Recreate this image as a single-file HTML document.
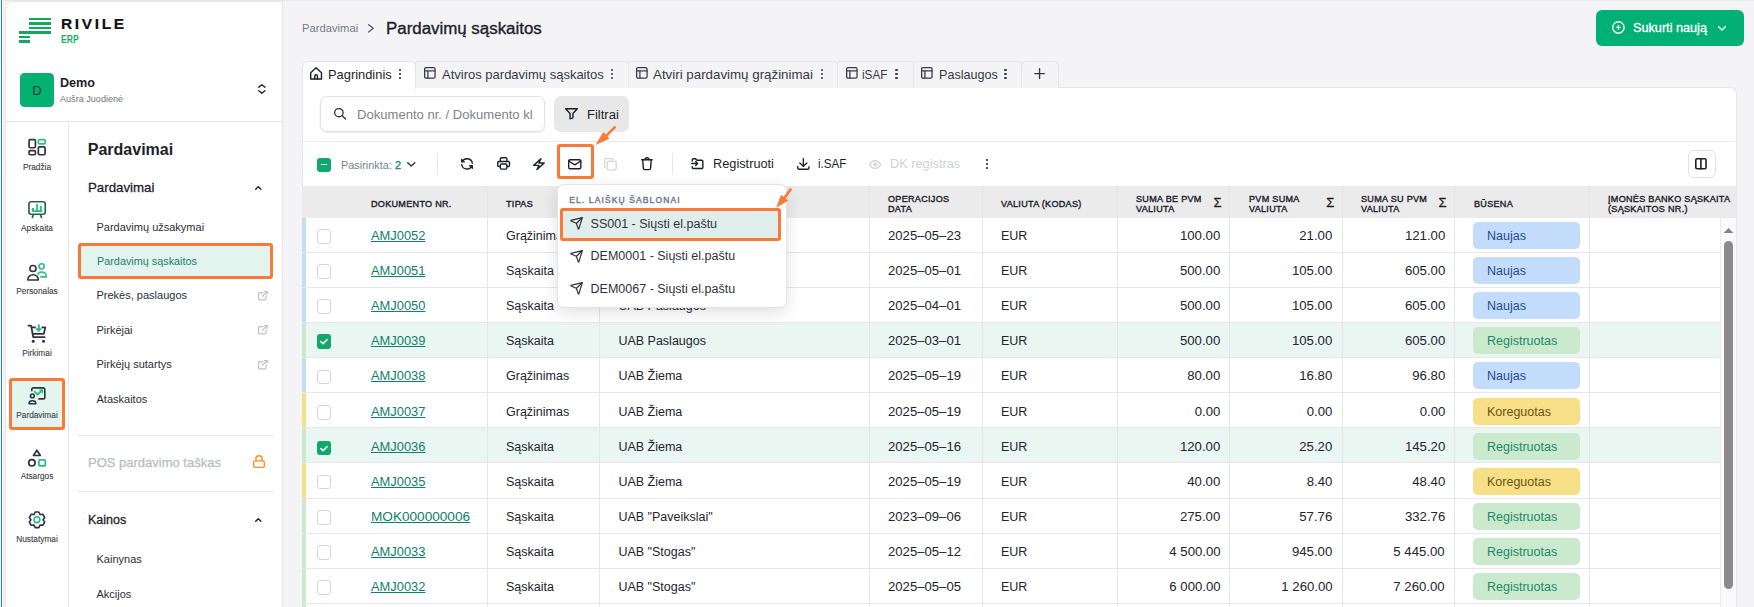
<!DOCTYPE html><html><head><meta charset="utf-8"><style>
html,body{margin:0;padding:0;} body{width:1754px;height:607px;overflow:hidden;position:relative;background:#f4f4f6;font-family:"Liberation Sans", sans-serif;} div,svg{box-sizing:border-box;} svg.i *{vector-effect:non-scaling-stroke;}
</style></head><body>
<div style="position:absolute;left:0px;top:0px;width:1754px;height:1px;background:#e9e9eb"></div>
<div style="position:absolute;left:0px;top:0px;width:1px;height:607px;background:#ffffff"></div>
<div style="position:absolute;left:1px;top:0px;width:1px;height:607px;background:#2584de"></div>
<div style="position:absolute;left:2px;top:0px;width:1px;height:607px;background:#fbfbf7"></div>
<div style="position:absolute;left:5px;top:1px;width:278px;height:606px;background:#fff;border:1px solid #e6e6e8;border-bottom:none;border-radius:7px 0 0 0;"></div>
<div style="position:absolute;left:29.2px;top:18.1px;width:21.7px;height:2.3px;background:#12a95f"></div>
<div style="position:absolute;left:29.2px;top:22.4px;width:21.7px;height:2.3px;background:#12a95f"></div>
<div style="position:absolute;left:29.2px;top:27px;width:21.7px;height:2.3px;background:#12a95f"></div>
<div style="position:absolute;left:18.9px;top:31.3px;width:32px;height:2.3px;background:#12a95f"></div>
<div style="position:absolute;left:18.9px;top:35.9px;width:11px;height:2.3px;background:#12a95f"></div>
<div style="position:absolute;left:18.9px;top:40.3px;width:11px;height:2.3px;background:#12a95f"></div>
<div style='position:absolute;left:61.00px;top:15.78px;font-size:15.5px;line-height:15.5px;font-weight:700;color:#111;white-space:nowrap;letter-spacing:2.64px;-webkit-text-stroke:0.2px #111;'>RIVILE</div>
<div style='position:absolute;left:61.00px;top:34.63px;font-size:10px;line-height:10px;font-weight:700;color:#1aae66;white-space:nowrap;transform:scaleX(0.855);transform-origin:left center;'>ERP</div>
<div style="position:absolute;left:20px;top:73px;width:34px;height:34px;background:#03b273;border-radius:4.5px;"></div>
<div style='position:absolute;left:32.30px;top:84.40px;font-size:13px;line-height:13px;font-weight:400;color:#0b3d2a;white-space:nowrap;'>D</div>
<div style='position:absolute;left:60.00px;top:76.40px;font-size:13px;line-height:13px;font-weight:700;color:#1d1f2b;white-space:nowrap;transform:scaleX(0.97);transform-origin:left center;'>Demo</div>
<div style='position:absolute;left:60.00px;top:94.78px;font-size:9px;line-height:9px;font-weight:400;color:#6f7380;white-space:nowrap;transform:scaleX(1.01);transform-origin:left center;'>Aušra Juodienė</div>
<svg class="i" style="position:absolute;left:258.00px;top:84.00px;overflow:visible;" width="7.70" height="9.90"><g transform="translate(-5.450 -2.250) scale(0.7750 0.6000)" fill="none" stroke="#2a2d38" stroke-width="1.5" stroke-linecap="round" stroke-linejoin="round"><path d="M8 9l4 -4l4 4"/><path d="M16 15l-4 4l-4 -4"/></g></svg>
<div style="position:absolute;left:6px;top:121px;width:276px;height:1px;background:#e6e6e8"></div>
<div style="position:absolute;left:68px;top:122px;width:1px;height:485px;background:#e6e6e8"></div>
<div style="position:absolute;left:9px;top:378px;width:56px;height:52px;background:#e4f5ef;border:3px solid #f97a38;border-radius:3px;"></div>
<svg style="position:absolute;left:24px;top:130px;overflow:visible" width="26" height="26" viewBox="0 0 26 26" fill="none" stroke-width="1.7" stroke-linecap="round" stroke-linejoin="round"><rect x="5.05" y="9.65" width="6.4" height="8.1" rx="1.2" stroke="#2f3340"/><rect x="5.05" y="20.55" width="6.4" height="4.2" rx="1.2" stroke="#2f3340"/><rect x="14.35" y="9.65" width="6.7" height="4.3" rx="1.2" stroke="#2bbd7e"/><rect x="14.35" y="16.85" width="6.7" height="7.9" rx="1.2" stroke="#2f3340"/></svg>
<div style="position:absolute;left:-3px;width:80px;text-align:center;top:162.87px;font-size:8.3px;line-height:8.3px;color:#3a3d48;white-space:nowrap;-webkit-text-stroke:0.1px #3a3d48">Pradžia</div>
<svg style="position:absolute;left:24px;top:196px;overflow:visible" width="26" height="26" viewBox="0 0 26 26" fill="none" stroke-width="1.7" stroke-linecap="round" stroke-linejoin="round"><rect x="4.95" y="5.75" width="16.3" height="12.5" rx="2.2" stroke="#2f5f55"/><path d="M9.2 19.1L8.4 21.4M16.6 19.1L17.5 21.4" stroke="#2f5f55"/><path d="M7.8 15.9V12H10V14.2H12.1V7.8H13.9V14.2H15.8V10.1H17.8V14L18.5 15.9Z" fill="#2bbd7e" stroke="none"/></svg>
<div style="position:absolute;left:-3px;width:80px;text-align:center;top:224.37px;font-size:8.3px;line-height:8.3px;color:#3a3d48;white-space:nowrap;-webkit-text-stroke:0.1px #3a3d48">Apskaita</div>
<svg style="position:absolute;left:24px;top:258px;overflow:visible" width="26" height="26" viewBox="0 0 26 26" fill="none" stroke-width="1.7" stroke-linecap="round" stroke-linejoin="round"><circle cx="9" cy="10.5" r="3.05" stroke="#2f3340" stroke-width="1.6"/><path d="M3.9 22V21.6A5.2 4.8 0 0 1 14.3 21.6V22Z" stroke="#2f3340" stroke-width="1.6"/><circle cx="17.6" cy="8.35" r="2.6" stroke="#2bbd7e" stroke-width="1.6"/><path d="M13.8 16.0A4.6 4.3 0 0 1 22.2 18.7V18.9H16.8" stroke="#2bbd7e" stroke-width="1.6"/></svg>
<div style="position:absolute;left:-3px;width:80px;text-align:center;top:287.37px;font-size:8.3px;line-height:8.3px;color:#3a3d48;white-space:nowrap;-webkit-text-stroke:0.1px #3a3d48">Personalas</div>
<svg style="position:absolute;left:24px;top:320px;overflow:visible" width="26" height="26" viewBox="0 0 26 26" fill="none" stroke-width="1.7" stroke-linecap="round" stroke-linejoin="round"><path d="M4.4 5.6H7.1L9.2 17.2H20.5" stroke="#2f3340" stroke-width="1.8"/><path d="M7.9 7.4H11M18.3 7.4H21.3L19.8 13.9H9.3" stroke="#2f3340" stroke-width="1.8"/><circle cx="9.2" cy="21.2" r="1.5" fill="#2f3340" stroke="none"/><circle cx="19.5" cy="21.2" r="1.5" fill="#2f3340" stroke="none"/><path d="M14.8 5.3V9.5" stroke="#2bbd7e" stroke-width="1.9"/><path d="M12.1 8.7H17.5L14.8 11.7Z" fill="#2bbd7e" stroke="#2bbd7e" stroke-width="0.8"/></svg>
<div style="position:absolute;left:-3px;width:80px;text-align:center;top:349.37px;font-size:8.3px;line-height:8.3px;color:#3a3d48;white-space:nowrap;-webkit-text-stroke:0.1px #3a3d48">Pirkimai</div>
<svg style="position:absolute;left:24px;top:382px;overflow:visible" width="26" height="26" viewBox="0 0 26 26" fill="none" stroke-width="1.7" stroke-linecap="round" stroke-linejoin="round"><path d="M7.8 8.8V7.6A1.7 1.7 0 0 1 9.5 5.9H19.1A1.7 1.7 0 0 1 20.8 7.6V15.2A1.7 1.7 0 0 1 19.1 16.9H14.9" stroke="#2f3340" stroke-width="1.6"/><circle cx="8.35" cy="13.9" r="1.85" stroke="#2f3340" stroke-width="1.6"/><path d="M5.1 21.8V21.3A3.35 2.6 0 0 1 11.8 21.3V21.8Z" stroke="#2f3340" stroke-width="1.6"/><path d="M10.6 9.7L13.5 12.6L17.4 8.9" stroke="#2bbd7e" stroke-width="1.8"/><path d="M15.8 7.9L18.9 7.6L18.5 10.8Z" fill="#2bbd7e" stroke="#2bbd7e" stroke-width="0.8"/></svg>
<div style="position:absolute;left:-3px;width:80px;text-align:center;top:411.37px;font-size:8.3px;line-height:8.3px;color:#3a3d48;white-space:nowrap;-webkit-text-stroke:0.1px #3a3d48">Pardavimai</div>
<svg style="position:absolute;left:24px;top:444px;overflow:visible" width="26" height="26" viewBox="0 0 26 26" fill="none" stroke-width="1.7" stroke-linecap="round" stroke-linejoin="round"><path d="M12.85 6.2L16.3 11.5H9.5Z" stroke="#2f3340" stroke-width="1.7"/><circle cx="7.9" cy="18.8" r="3.2" stroke="#2f3340" stroke-width="1.7"/><rect x="14.9" y="15.8" width="6.4" height="6.1" rx="0.8" stroke="#2bbd7e" stroke-width="1.7"/></svg>
<div style="position:absolute;left:-3px;width:80px;text-align:center;top:472.37px;font-size:8.3px;line-height:8.3px;color:#3a3d48;white-space:nowrap;-webkit-text-stroke:0.1px #3a3d48">Atsargos</div>
<svg style="position:absolute;left:24px;top:506px;overflow:visible" width="26" height="26" viewBox="0 0 26 26" fill="none" stroke-width="1.7" stroke-linecap="round" stroke-linejoin="round"><path d="M11.20 6.01 L14.80 6.01 L16.05 8.52 L18.85 8.34 L20.65 11.46 L19.10 13.80 L20.65 16.14 L18.85 19.26 L16.05 19.08 L14.80 21.59 L11.20 21.59 L9.95 19.08 L7.15 19.26 L5.35 16.14 L6.90 13.80 L5.35 11.46 L7.15 8.34 L9.95 8.52Z" stroke="#2f3340" stroke-width="1.6"/><circle cx="12.9" cy="13.7" r="2.9" stroke="#2bbd7e" stroke-width="1.6"/></svg>
<div style="position:absolute;left:-3px;width:80px;text-align:center;top:534.87px;font-size:8.3px;line-height:8.3px;color:#3a3d48;white-space:nowrap;-webkit-text-stroke:0.1px #3a3d48">Nustatymai</div>
<div style='position:absolute;left:87.80px;top:142.16px;font-size:16px;line-height:16px;font-weight:700;color:#1d1f2b;white-space:nowrap;'>Pardavimai</div>
<div style='position:absolute;left:87.80px;top:180.80px;font-size:13px;line-height:13px;font-weight:400;color:#1d1f2b;white-space:nowrap;-webkit-text-stroke:0.3px #1d1f2b;transform:scaleX(1.02);transform-origin:left center;'>Pardavimai</div>
<svg class="i" style="position:absolute;left:254.90px;top:185.90px;overflow:visible;" width="6.60" height="3.90"><g transform="translate(-1.900 -3.050) scale(0.4333 0.4167)" fill="none" stroke="#1d1f2b" stroke-width="1.4" stroke-linecap="round" stroke-linejoin="round"><path d="M6 15l6 -6l6 6"/></g></svg>
<div style="position:absolute;left:78px;top:243px;width:195px;height:35.6px;background:#e3f4ee;border:3px solid #f97a38;border-radius:3px;"></div>
<div style='position:absolute;left:96.50px;top:222.39px;font-size:11px;line-height:11px;font-weight:400;color:#2b2e3a;white-space:nowrap;'>Pardavimų užsakymai</div>
<div style='position:absolute;left:96.50px;top:255.89px;font-size:11px;line-height:11px;font-weight:400;color:#17806a;white-space:nowrap;transform:scaleX(0.985);transform-origin:left center;'>Pardavimų sąskaitos</div>
<div style='position:absolute;left:96.50px;top:290.29px;font-size:11px;line-height:11px;font-weight:400;color:#2b2e3a;white-space:nowrap;'>Prekės, paslaugos</div>
<div style='position:absolute;left:96.50px;top:325.49px;font-size:11px;line-height:11px;font-weight:400;color:#2b2e3a;white-space:nowrap;'>Pirkėjai</div>
<div style='position:absolute;left:96.50px;top:358.99px;font-size:11px;line-height:11px;font-weight:400;color:#2b2e3a;white-space:nowrap;'>Pirkėjų sutartys</div>
<div style='position:absolute;left:96.50px;top:393.59px;font-size:11px;line-height:11px;font-weight:400;color:#2b2e3a;white-space:nowrap;'>Ataskaitos</div>
<svg class="i" style="position:absolute;left:258.10px;top:290.80px;overflow:visible;" width="9.80" height="9.50"><g transform="translate(-1.550 -1.475) scale(0.5375 0.5188)" fill="none" stroke="#bfc1c6" stroke-width="1.2" stroke-linecap="round" stroke-linejoin="round"><path d="M12 6h-6a2 2 0 0 0 -2 2v10a2 2 0 0 0 2 2h10a2 2 0 0 0 2 -2v-6"/><path d="M11 13l9 -9"/><path d="M15 4h5v5"/></g></svg>
<svg class="i" style="position:absolute;left:258.10px;top:325.20px;overflow:visible;" width="9.80" height="9.50"><g transform="translate(-1.550 -1.475) scale(0.5375 0.5188)" fill="none" stroke="#bfc1c6" stroke-width="1.2" stroke-linecap="round" stroke-linejoin="round"><path d="M12 6h-6a2 2 0 0 0 -2 2v10a2 2 0 0 0 2 2h10a2 2 0 0 0 2 -2v-6"/><path d="M11 13l9 -9"/><path d="M15 4h5v5"/></g></svg>
<svg class="i" style="position:absolute;left:258.10px;top:359.50px;overflow:visible;" width="9.80" height="9.50"><g transform="translate(-1.550 -1.475) scale(0.5375 0.5188)" fill="none" stroke="#bfc1c6" stroke-width="1.2" stroke-linecap="round" stroke-linejoin="round"><path d="M12 6h-6a2 2 0 0 0 -2 2v10a2 2 0 0 0 2 2h10a2 2 0 0 0 2 -2v-6"/><path d="M11 13l9 -9"/><path d="M15 4h5v5"/></g></svg>
<div style="position:absolute;left:78px;top:435px;width:195px;height:1px;background:#e6e6e8"></div>
<div style='position:absolute;left:88.00px;top:455.70px;font-size:13px;line-height:13px;font-weight:400;color:#b9bcc3;white-space:nowrap;-webkit-text-stroke:0.25px #b9bcc3;'>POS pardavimo taškas</div>
<svg class="i" style="position:absolute;left:253.00px;top:455.20px;overflow:visible;" width="12.00" height="13.10"><g transform="translate(-3.086 -1.250) scale(0.7571 0.6500)" fill="none" stroke="#ff8c1a" stroke-width="1.4" stroke-linecap="round" stroke-linejoin="round"><path d="M5 13a2 2 0 0 1 2 -2h10a2 2 0 0 1 2 2v6a2 2 0 0 1 -2 2h-10a2 2 0 0 1 -2 -2v-6z"/><path d="M8 11v-4a4 4 0 1 1 8 0v4"/></g></svg>
<div style="position:absolute;left:78px;top:491px;width:195px;height:1px;background:#e6e6e8"></div>
<div style='position:absolute;left:88.00px;top:513.62px;font-size:12.5px;line-height:12.5px;font-weight:400;color:#1d1f2b;white-space:nowrap;-webkit-text-stroke:0.3px #1d1f2b;'>Kainos</div>
<svg class="i" style="position:absolute;left:254.90px;top:517.90px;overflow:visible;" width="6.60" height="3.90"><g transform="translate(-1.900 -3.050) scale(0.4333 0.4167)" fill="none" stroke="#1d1f2b" stroke-width="1.4" stroke-linecap="round" stroke-linejoin="round"><path d="M6 15l6 -6l6 6"/></g></svg>
<div style='position:absolute;left:96.50px;top:554.49px;font-size:11px;line-height:11px;font-weight:400;color:#2b2e3a;white-space:nowrap;'>Kainynas</div>
<div style='position:absolute;left:96.50px;top:589.09px;font-size:11px;line-height:11px;font-weight:400;color:#2b2e3a;white-space:nowrap;'>Akcijos</div>
<div style="position:absolute;left:282px;top:1px;width:1px;height:606px;background:#e6e6e8"></div>
<div style='position:absolute;left:301.70px;top:23.29px;font-size:11px;line-height:11px;font-weight:400;color:#767884;white-space:nowrap;transform:scaleX(1.02);transform-origin:left center;'>Pardavimai</div>
<svg class="i" style="position:absolute;left:368.40px;top:24.40px;overflow:visible;" width="5.90" height="8.60"><g transform="translate(-6.250 -3.000) scale(0.7667 0.6083)" fill="none" stroke="#555866" stroke-width="1.3" stroke-linecap="round" stroke-linejoin="round"><path d="M9 6l6 6l-6 6"/></g></svg>
<div style='position:absolute;left:385.70px;top:20.86px;font-size:16px;line-height:16px;font-weight:400;color:#1d1f2b;white-space:nowrap;-webkit-text-stroke:0.35px #1d1f2b;transform:scaleX(1.055);transform-origin:left center;'>Pardavimų sąskaitos</div>
<div style="position:absolute;left:1596px;top:10px;width:148px;height:36px;background:#00b074;border-radius:6px;"></div>
<svg class="i" style="position:absolute;left:1611.50px;top:21.20px;overflow:visible;" width="12.80" height="12.80"><g transform="translate(-1.200 -1.200) scale(0.6333 0.6333)" fill="none" stroke="#fff" stroke-width="1.4" stroke-linecap="round" stroke-linejoin="round"><path d="M3 12a9 9 0 1 0 18 0a9 9 0 0 0 -18 0"/><path d="M9 12h6"/><path d="M12 9v6"/></g></svg>
<div style='position:absolute;left:1633.00px;top:20.90px;font-size:13px;line-height:13px;font-weight:400;color:#fff;white-space:nowrap;-webkit-text-stroke:0.3px #fff;transform:scaleX(0.975);transform-origin:left center;'>Sukurti naują</div>
<svg class="i" style="position:absolute;left:1718.00px;top:25.50px;overflow:visible;" width="8.00" height="4.70"><g transform="translate(-2.600 -4.250) scale(0.5500 0.5500)" fill="none" stroke="#fff" stroke-width="1.4" stroke-linecap="round" stroke-linejoin="round"><path d="M6 9l6 6l6 -6"/></g></svg>
<div style="position:absolute;left:302px;top:87px;width:1435px;height:520px;background:#fff;border:1px solid #e6e6e8;border-bottom:none;border-radius:0 7px 0 0;"></div>
<div style="position:absolute;left:415px;top:61px;width:213.5px;height:27px;background:#f4f4f6;border:1px solid #e6e6e8;border-bottom:none;border-radius:4px 4px 0 0;"></div>
<svg class="i" style="position:absolute;left:424.20px;top:67.20px;overflow:visible;" width="11.70" height="11.80"><g transform="translate(-1.950 -1.975) scale(0.6500 0.6562)" fill="none" stroke="#3a3d48" stroke-width="1.3" stroke-linecap="round" stroke-linejoin="round"><path d="M4 6a2 2 0 0 1 2 -2h12a2 2 0 0 1 2 2v12a2 2 0 0 1 -2 2h-12a2 2 0 0 1 -2 -2z"/><path d="M4 9h16"/><path d="M9 9v11"/></g></svg>
<div style='position:absolute;left:442.00px;top:67.90px;font-size:13px;line-height:13px;font-weight:400;color:#363945;white-space:nowrap;'>Atviros pardavimų sąskaitos</div>
<div style="position:absolute;left:610.55px;top:69.20px;width:2.3px;height:2.3px;border-radius:50%;background:#363945"></div>
<div style="position:absolute;left:610.55px;top:72.95px;width:2.3px;height:2.3px;border-radius:50%;background:#363945"></div>
<div style="position:absolute;left:610.55px;top:76.70px;width:2.3px;height:2.3px;border-radius:50%;background:#363945"></div>
<div style="position:absolute;left:627.5px;top:61px;width:210.5px;height:27px;background:#f4f4f6;border:1px solid #e6e6e8;border-bottom:none;border-radius:4px 4px 0 0;"></div>
<svg class="i" style="position:absolute;left:636.00px;top:67.20px;overflow:visible;" width="11.70" height="11.80"><g transform="translate(-1.950 -1.975) scale(0.6500 0.6562)" fill="none" stroke="#3a3d48" stroke-width="1.3" stroke-linecap="round" stroke-linejoin="round"><path d="M4 6a2 2 0 0 1 2 -2h12a2 2 0 0 1 2 2v12a2 2 0 0 1 -2 2h-12a2 2 0 0 1 -2 -2z"/><path d="M4 9h16"/><path d="M9 9v11"/></g></svg>
<div style='position:absolute;left:652.80px;top:67.90px;font-size:13px;line-height:13px;font-weight:400;color:#363945;white-space:nowrap;transform:scaleX(1.025);transform-origin:left center;'>Atviri pardavimų grąžinimai</div>
<div style="position:absolute;left:820.85px;top:69.20px;width:2.3px;height:2.3px;border-radius:50%;background:#363945"></div>
<div style="position:absolute;left:820.85px;top:72.95px;width:2.3px;height:2.3px;border-radius:50%;background:#363945"></div>
<div style="position:absolute;left:820.85px;top:76.70px;width:2.3px;height:2.3px;border-radius:50%;background:#363945"></div>
<div style="position:absolute;left:837px;top:61px;width:76.5px;height:27px;background:#f4f4f6;border:1px solid #e6e6e8;border-bottom:none;border-radius:4px 4px 0 0;"></div>
<svg class="i" style="position:absolute;left:845.80px;top:67.20px;overflow:visible;" width="11.70" height="11.80"><g transform="translate(-1.950 -1.975) scale(0.6500 0.6562)" fill="none" stroke="#3a3d48" stroke-width="1.3" stroke-linecap="round" stroke-linejoin="round"><path d="M4 6a2 2 0 0 1 2 -2h12a2 2 0 0 1 2 2v12a2 2 0 0 1 -2 2h-12a2 2 0 0 1 -2 -2z"/><path d="M4 9h16"/><path d="M9 9v11"/></g></svg>
<div style='position:absolute;left:862.40px;top:67.90px;font-size:13px;line-height:13px;font-weight:400;color:#363945;white-space:nowrap;transform:scaleX(0.9);transform-origin:left center;'>iSAF</div>
<div style="position:absolute;left:895.45px;top:69.20px;width:2.3px;height:2.3px;border-radius:50%;background:#363945"></div>
<div style="position:absolute;left:895.45px;top:72.95px;width:2.3px;height:2.3px;border-radius:50%;background:#363945"></div>
<div style="position:absolute;left:895.45px;top:76.70px;width:2.3px;height:2.3px;border-radius:50%;background:#363945"></div>
<div style="position:absolute;left:912.5px;top:61px;width:109.5px;height:27px;background:#f4f4f6;border:1px solid #e6e6e8;border-bottom:none;border-radius:4px 4px 0 0;"></div>
<svg class="i" style="position:absolute;left:921.40px;top:67.20px;overflow:visible;" width="11.70" height="11.80"><g transform="translate(-1.950 -1.975) scale(0.6500 0.6562)" fill="none" stroke="#3a3d48" stroke-width="1.3" stroke-linecap="round" stroke-linejoin="round"><path d="M4 6a2 2 0 0 1 2 -2h12a2 2 0 0 1 2 2v12a2 2 0 0 1 -2 2h-12a2 2 0 0 1 -2 -2z"/><path d="M4 9h16"/><path d="M9 9v11"/></g></svg>
<div style='position:absolute;left:938.60px;top:67.90px;font-size:13px;line-height:13px;font-weight:400;color:#363945;white-space:nowrap;transform:scaleX(0.97);transform-origin:left center;'>Paslaugos</div>
<div style="position:absolute;left:1004.45px;top:69.20px;width:2.3px;height:2.3px;border-radius:50%;background:#363945"></div>
<div style="position:absolute;left:1004.45px;top:72.95px;width:2.3px;height:2.3px;border-radius:50%;background:#363945"></div>
<div style="position:absolute;left:1004.45px;top:76.70px;width:2.3px;height:2.3px;border-radius:50%;background:#363945"></div>
<div style="position:absolute;left:1021px;top:61px;width:38px;height:27px;background:#f4f4f6;border:1px solid #e6e6e8;border-bottom:none;border-radius:6px 6px 0 0;"></div>
<svg class="i" style="position:absolute;left:1033.90px;top:67.80px;overflow:visible;" width="11.10" height="11.20"><g transform="translate(-2.764 -2.800) scale(0.6929 0.7000)" fill="none" stroke="#3a3a3a" stroke-width="1.4" stroke-linecap="round" stroke-linejoin="round"><path d="M12 5l0 14"/><path d="M5 12l14 0"/></g></svg>
<div style="position:absolute;left:302px;top:61px;width:114px;height:28px;background:#fff;border:1px solid #e6e6e8;border-bottom:none;border-radius:6px 6px 0 0;"></div>
<svg class="i" style="position:absolute;left:309.90px;top:66.50px;overflow:visible;" width="12.20" height="12.70"><g transform="translate(-2.000 -2.125) scale(0.6750 0.7063)" fill="none" stroke="#1d1f2b" stroke-width="1.4" stroke-linecap="round" stroke-linejoin="round"><path d="M4 20v-9l8 -7l8 7v9z"/><path d="M10 20v-4a2 2 0 0 1 4 0v4"/></g></svg>
<div style='position:absolute;left:328.00px;top:67.90px;font-size:13px;line-height:13px;font-weight:400;color:#1d1f2b;white-space:nowrap;transform:scaleX(0.99);transform-origin:left center;'>Pagrindinis</div>
<div style="position:absolute;left:398.55px;top:69.20px;width:2.3px;height:2.3px;border-radius:50%;background:#1d1f2b"></div>
<div style="position:absolute;left:398.55px;top:72.95px;width:2.3px;height:2.3px;border-radius:50%;background:#1d1f2b"></div>
<div style="position:absolute;left:398.55px;top:76.70px;width:2.3px;height:2.3px;border-radius:50%;background:#1d1f2b"></div>
<div style="position:absolute;left:320px;top:96px;width:224.5px;height:35.5px;background:#fff;border:1px solid #e2e2e4;border-radius:7px;box-shadow:0 1px 2px rgba(0,0,0,0.07);"></div>
<svg class="i" style="position:absolute;left:333.90px;top:108.30px;overflow:visible;" width="12.20" height="11.70"><g transform="translate(-1.167 -1.083) scale(0.6056 0.5778)" fill="none" stroke="#2d303b" stroke-width="1.3" stroke-linecap="round" stroke-linejoin="round"><path d="M10 10m-7 0a7 7 0 1 0 14 0a7 7 0 1 0 -14 0"/><path d="M21 21l-6 -6"/></g></svg>
<div style='position:absolute;left:356.60px;top:109.32px;font-size:12.5px;line-height:12.5px;font-weight:400;color:#80838c;white-space:nowrap;transform:scaleX(1.045);transform-origin:left center;'>Dokumento nr. / Dokumento kl</div>
<div style="position:absolute;left:554px;top:96px;width:75px;height:35.5px;background:#e8e8e8;border-radius:7px;"></div>
<svg class="i" style="position:absolute;left:564.60px;top:108.30px;overflow:visible;" width="13.00" height="11.50"><g transform="translate(-2.200 -2.667) scale(0.7250 0.6733)" fill="none" stroke="#1d1f2b" stroke-width="1.4" stroke-linecap="round" stroke-linejoin="round"><path d="M4 5H20L14 12V18.6L10 20V12Z"/></g></svg>
<div style='position:absolute;left:586.50px;top:109.32px;font-size:12.5px;line-height:12.5px;font-weight:400;color:#1d1f2b;white-space:nowrap;transform:scaleX(1.04);transform-origin:left center;'>Filtrai</div>
<div style="position:absolute;left:302px;top:141px;width:1432px;height:1px;background:#e8e8e8"></div>
<div style="position:absolute;left:317px;top:158.3px;width:14px;height:13.5px;background:#10a96a;border-radius:3px;"></div>
<div style="position:absolute;left:321px;top:164.1px;width:6px;height:1.3px;background:#fff;border-radius:0.5px;"></div>
<div style='position:absolute;left:340.50px;top:160.39px;font-size:11px;line-height:11px;font-weight:400;color:#7b7f8c;white-space:nowrap;transform:scaleX(0.99);transform-origin:left center;'>Pasirinkta: <span style="color:#118a6a;-webkit-text-stroke:0.3px #118a6a">2</span></div>
<svg class="i" style="position:absolute;left:407.40px;top:162.00px;overflow:visible;" width="8.50" height="4.60"><g transform="translate(-2.850 -4.100) scale(0.5917 0.5333)" fill="none" stroke="#2d303b" stroke-width="1.4" stroke-linecap="round" stroke-linejoin="round"><path d="M6 9l6 6l6 -6"/></g></svg>
<div style="position:absolute;left:437px;top:153px;width:1px;height:22px;background:#e6e6e8"></div>
<svg class="i" style="position:absolute;left:461.00px;top:158.00px;overflow:visible;" width="12.00" height="11.70"><g transform="translate(-1.950 -1.875) scale(0.6625 0.6437)" fill="none" stroke="#1d1f2b" stroke-width="1.4" stroke-linecap="round" stroke-linejoin="round"><path d="M20 11a8.1 8.1 0 0 0 -15.5 -2m-.5 -4v4h4"/><path d="M4 13a8.1 8.1 0 0 0 15.5 2m.5 4v-4h-4"/></g></svg>
<svg class="i" style="position:absolute;left:496.50px;top:157.40px;overflow:visible;" width="13.20" height="12.80"><g transform="translate(-1.267 -1.200) scale(0.6556 0.6333)" fill="none" stroke="#1d1f2b" stroke-width="1.4" stroke-linecap="round" stroke-linejoin="round"><path d="M17 17h2a2 2 0 0 0 2 -2v-4a2 2 0 0 0 -2 -2h-14a2 2 0 0 0 -2 2v4a2 2 0 0 0 2 2h2"/><path d="M17 9v-4a2 2 0 0 0 -2 -2h-6a2 2 0 0 0 -2 2v4"/><path d="M7 15a2 2 0 0 1 2 -2h6a2 2 0 0 1 2 2v4a2 2 0 0 1 -2 2h-6a2 2 0 0 1 -2 -2z"/></g></svg>
<svg class="i" style="position:absolute;left:533.10px;top:157.70px;overflow:visible;" width="11.90" height="12.30"><g transform="translate(-1.925 -1.117) scale(0.6562 0.6056)" fill="none" stroke="#1d1f2b" stroke-width="1.4" stroke-linecap="round" stroke-linejoin="round"><path d="M15 3l-11 11h8l-3 7l11 -11h-8z"/></g></svg>
<div style="position:absolute;left:557px;top:144px;width:37px;height:35px;border:3px solid #f97a38;border-radius:3px;"></div>
<svg class="i" style="position:absolute;left:568.20px;top:158.60px;overflow:visible;" width="13.50" height="10.40"><g transform="translate(-1.317 -2.514) scale(0.6722 0.6429)" fill="none" stroke="#1d1f2b" stroke-width="1.4" stroke-linecap="round" stroke-linejoin="round"><path d="M3 7a2 2 0 0 1 2 -2h14a2 2 0 0 1 2 2v10a2 2 0 0 1 -2 2h-14a2 2 0 0 1 -2 -2v-10z"/><path d="M3 7l9 6l9 -6"/></g></svg>
<svg class="i" style="position:absolute;left:604.20px;top:157.50px;overflow:visible;" width="12.80" height="12.70"><g transform="translate(-1.267 -1.250) scale(0.6389 0.6333)" fill="none" stroke="#d4d5d9" stroke-width="1.3" stroke-linecap="round" stroke-linejoin="round"><path d="M7 9.667a2.667 2.667 0 0 1 2.667 -2.667h8.666a2.667 2.667 0 0 1 2.667 2.667v8.666a2.667 2.667 0 0 1 -2.667 2.667h-8.666a2.667 2.667 0 0 1 -2.667 -2.667z"/><path d="M4.012 16.737a2.005 2.005 0 0 1 -1.012 -1.737v-10c0 -1.1 .9 -2 2 -2h10c.75 0 1.158 .385 1.5 1"/></g></svg>
<svg class="i" style="position:absolute;left:641.10px;top:157.10px;overflow:visible;" width="11.90" height="13.30"><g transform="translate(-1.925 -2.100) scale(0.6562 0.7000)" fill="none" stroke="#1d1f2b" stroke-width="1.4" stroke-linecap="round" stroke-linejoin="round"><path d="M4 7h16"/><path d="M5.5 7l1 12a2 2 0 0 0 2 2h7a2 2 0 0 0 2 -2l1 -12"/><path d="M9 7a3 3 0 0 1 6 0"/></g></svg>
<div style="position:absolute;left:672px;top:153px;width:1px;height:22px;background:#e6e6e8"></div>
<svg class="i" style="position:absolute;left:691.20px;top:158.10px;overflow:visible;" width="13.10" height="10.50"><g transform="translate(0.152 -0.229) scale(0.9141 0.9286)" fill="none" stroke="#1d1f2b" stroke-width="1.4" stroke-linecap="round" stroke-linejoin="round"><path d="M1.2 3.4v-1.4a1 1 0 0 1 1 -1h2.6l1.6 1.7h5.4a1 1 0 0 1 1 1v6.8a1 1 0 0 1 -1 1h-9.6a1 1 0 0 1 -1 -1v-0.9"/><path d="M0.6 6.2h6.3M5 4.1l2 2.1l-2 2.1"/></g></svg>
<div style='position:absolute;left:713.00px;top:157.82px;font-size:12.5px;line-height:12.5px;font-weight:400;color:#1d1f2b;white-space:nowrap;transform:scaleX(1.02);transform-origin:left center;'>Registruoti</div>
<svg class="i" style="position:absolute;left:796.70px;top:158.00px;overflow:visible;" width="12.70" height="12.00"><g transform="translate(-2.125 -1.794) scale(0.7062 0.6235)" fill="none" stroke="#1d1f2b" stroke-width="1.4" stroke-linecap="round" stroke-linejoin="round"><path d="M4 17v2a2 2 0 0 0 2 2h12a2 2 0 0 0 2 -2v-2"/><path d="M7 11l5 5l5 -5"/><path d="M12 4l0 12"/></g></svg>
<div style='position:absolute;left:818.30px;top:157.82px;font-size:12.5px;line-height:12.5px;font-weight:400;color:#1d1f2b;white-space:nowrap;transform:scaleX(0.93);transform-origin:left center;'>i.SAF</div>
<svg class="i" style="position:absolute;left:869.00px;top:159.70px;overflow:visible;" width="12.30" height="9.10"><g transform="translate(-1.183 -3.250) scale(0.6111 0.6500)" fill="none" stroke="#d0d1d6" stroke-width="1.3" stroke-linecap="round" stroke-linejoin="round"><path d="M10 12a2 2 0 1 0 4 0a2 2 0 0 0 -4 0"/><path d="M21 12c-2.4 4 -5.4 6 -9 6c-3.6 0 -6.6 -2 -9 -6c2.4 -4 5.4 -6 9 -6c3.6 0 6.6 2 9 6"/></g></svg>
<div style='position:absolute;left:890.30px;top:157.82px;font-size:12.5px;line-height:12.5px;font-weight:400;color:#cfd0d5;white-space:nowrap;transform:scaleX(1.02);transform-origin:left center;'>DK registras</div>
<div style="position:absolute;left:985.75px;top:158.50px;width:2.5px;height:2.5px;border-radius:50%;background:#1d1f2b"></div>
<div style="position:absolute;left:985.75px;top:162.50px;width:2.5px;height:2.5px;border-radius:50%;background:#1d1f2b"></div>
<div style="position:absolute;left:985.75px;top:166.50px;width:2.5px;height:2.5px;border-radius:50%;background:#1d1f2b"></div>
<div style="position:absolute;left:1687.5px;top:150.3px;width:28.2px;height:27.3px;background:#fff;border:1px solid #dfe4ea;border-radius:6px;"></div>
<svg class="i" style="position:absolute;left:1694.90px;top:158.20px;overflow:visible;" width="11.80" height="11.60"><g transform="translate(-1.750 -1.700) scale(0.6375 0.6250)" fill="none" stroke="#1d1f2b" stroke-width="1.6" stroke-linecap="round" stroke-linejoin="round"><path d="M4 6a2 2 0 0 1 2 -2h12a2 2 0 0 1 2 2v12a2 2 0 0 1 -2 2h-12a2 2 0 0 1 -2 -2z"/><path d="M12 4l0 16"/></g></svg>
<svg style="position:absolute;left:0;top:0" width="1754" height="607" viewBox="0 0 1754 607"><line x1="614.7" y1="127.4" x2="603.5" y2="138.5" stroke="#f97a38" stroke-width="2.7" stroke-linecap="round"/><path d="M596.2 144.4L603.3 132.3L609.1 138.5Z" fill="#f97a38" stroke="#f97a38" stroke-width="0.6" stroke-linejoin="round"/></svg>
<div style="position:absolute;left:302px;top:186px;width:1418px;height:32px;background:#ebebeb"></div>
<div style="position:absolute;left:1720px;top:186px;width:16px;height:32px;background:#ebebeb"></div>
<div style='position:absolute;left:370.80px;top:199.26px;font-size:9.5px;line-height:9.5px;font-weight:400;color:#1d1f2b;white-space:nowrap;letter-spacing:0.3px;-webkit-text-stroke:0.4px #1d1f2b;transform:scaleX(0.955);transform-origin:left center;'>DOKUMENTO NR.</div>
<div style='position:absolute;left:506.20px;top:199.26px;font-size:9.5px;line-height:9.5px;font-weight:400;color:#1d1f2b;white-space:nowrap;letter-spacing:0.3px;-webkit-text-stroke:0.4px #1d1f2b;transform:scaleX(0.955);transform-origin:left center;'>TIPAS</div>
<div style='position:absolute;left:618.00px;top:199.26px;font-size:9.5px;line-height:9.5px;font-weight:400;color:#1d1f2b;white-space:nowrap;letter-spacing:0.3px;-webkit-text-stroke:0.4px #1d1f2b;transform:scaleX(0.955);transform-origin:left center;'>PIRKĖJAS</div>
<div style='position:absolute;left:888.20px;top:194.16px;font-size:9.5px;line-height:9.5px;font-weight:400;color:#1d1f2b;white-space:nowrap;letter-spacing:0.3px;-webkit-text-stroke:0.4px #1d1f2b;transform:scaleX(0.955);transform-origin:left center;'>OPERACIJOS</div>
<div style='position:absolute;left:888.20px;top:203.96px;font-size:9.5px;line-height:9.5px;font-weight:400;color:#1d1f2b;white-space:nowrap;letter-spacing:0.3px;-webkit-text-stroke:0.4px #1d1f2b;transform:scaleX(0.955);transform-origin:left center;'>DATA</div>
<div style='position:absolute;left:1001.00px;top:199.26px;font-size:9.5px;line-height:9.5px;font-weight:400;color:#1d1f2b;white-space:nowrap;letter-spacing:0.3px;-webkit-text-stroke:0.4px #1d1f2b;transform:scaleX(0.955);transform-origin:left center;'>VALIUTA (KODAS)</div>
<div style='position:absolute;left:1135.70px;top:194.16px;font-size:9.5px;line-height:9.5px;font-weight:400;color:#1d1f2b;white-space:nowrap;letter-spacing:0.3px;-webkit-text-stroke:0.4px #1d1f2b;transform:scaleX(0.955);transform-origin:left center;'>SUMA BE PVM</div>
<div style='position:absolute;left:1135.70px;top:203.96px;font-size:9.5px;line-height:9.5px;font-weight:400;color:#1d1f2b;white-space:nowrap;letter-spacing:0.3px;-webkit-text-stroke:0.4px #1d1f2b;transform:scaleX(0.955);transform-origin:left center;'>VALIUTA</div>
<div style='position:absolute;left:1248.50px;top:194.16px;font-size:9.5px;line-height:9.5px;font-weight:400;color:#1d1f2b;white-space:nowrap;letter-spacing:0.3px;-webkit-text-stroke:0.4px #1d1f2b;transform:scaleX(0.955);transform-origin:left center;'>PVM SUMA</div>
<div style='position:absolute;left:1248.50px;top:203.96px;font-size:9.5px;line-height:9.5px;font-weight:400;color:#1d1f2b;white-space:nowrap;letter-spacing:0.3px;-webkit-text-stroke:0.4px #1d1f2b;transform:scaleX(0.955);transform-origin:left center;'>VALIUTA</div>
<div style='position:absolute;left:1360.80px;top:194.16px;font-size:9.5px;line-height:9.5px;font-weight:400;color:#1d1f2b;white-space:nowrap;letter-spacing:0.3px;-webkit-text-stroke:0.4px #1d1f2b;transform:scaleX(0.955);transform-origin:left center;'>SUMA SU PVM</div>
<div style='position:absolute;left:1360.80px;top:203.96px;font-size:9.5px;line-height:9.5px;font-weight:400;color:#1d1f2b;white-space:nowrap;letter-spacing:0.3px;-webkit-text-stroke:0.4px #1d1f2b;transform:scaleX(0.955);transform-origin:left center;'>VALIUTA</div>
<div style='position:absolute;left:1473.70px;top:199.26px;font-size:9.5px;line-height:9.5px;font-weight:400;color:#1d1f2b;white-space:nowrap;letter-spacing:0.3px;-webkit-text-stroke:0.4px #1d1f2b;transform:scaleX(0.955);transform-origin:left center;'>BŪSENA</div>
<div style='position:absolute;left:1608.30px;top:194.16px;font-size:9.5px;line-height:9.5px;font-weight:400;color:#1d1f2b;white-space:nowrap;letter-spacing:0.3px;-webkit-text-stroke:0.4px #1d1f2b;transform:scaleX(0.955);transform-origin:left center;'>ĮMONĖS BANKO SĄSKAITA</div>
<div style='position:absolute;left:1608.30px;top:203.96px;font-size:9.5px;line-height:9.5px;font-weight:400;color:#1d1f2b;white-space:nowrap;letter-spacing:0.3px;-webkit-text-stroke:0.4px #1d1f2b;transform:scaleX(0.955);transform-origin:left center;'>(SĄSKAITOS NR.)</div>
<div style='position:absolute;right:532.50px;top:196.40px;font-size:13px;line-height:13px;font-weight:400;color:#1d1f2b;white-space:nowrap;-webkit-text-stroke:0.3px #1d1f2b;'>Σ</div>
<div style='position:absolute;right:419.70px;top:196.40px;font-size:13px;line-height:13px;font-weight:400;color:#1d1f2b;white-space:nowrap;-webkit-text-stroke:0.3px #1d1f2b;'>Σ</div>
<div style='position:absolute;right:307.40px;top:196.40px;font-size:13px;line-height:13px;font-weight:400;color:#1d1f2b;white-space:nowrap;-webkit-text-stroke:0.3px #1d1f2b;'>Σ</div>
<div style="position:absolute;left:302px;top:218px;width:1418px;height:35px;background:#fff;border-bottom:1px solid #e8e8ea"></div>
<div style="position:absolute;left:302px;top:218px;width:4px;height:34px;background:#c4dcfc"></div>
<div style="position:absolute;left:317px;top:229.10px;width:14px;height:14.7px;background:#fff;border:1.3px solid #d6d6d9;border-radius:3px;"></div>
<div style='position:absolute;left:370.80px;top:229.82px;font-size:12.5px;line-height:12.5px;font-weight:400;color:#11806a;white-space:nowrap;transform:scaleX(1.03);transform-origin:left center;text-decoration:underline;text-underline-offset:0.5px;'>AMJ0052</div>
<div style='position:absolute;left:506.00px;top:229.82px;font-size:12.5px;line-height:12.5px;font-weight:400;color:#22242f;white-space:nowrap;'>Grąžinimas</div>
<div style='position:absolute;left:618.40px;top:229.82px;font-size:12.5px;line-height:12.5px;font-weight:400;color:#22242f;white-space:nowrap;'>UAB Paslaugos</div>
<div style='position:absolute;left:888.20px;top:229.82px;font-size:12.5px;line-height:12.5px;font-weight:400;color:#22242f;white-space:nowrap;transform:scaleX(1.05);transform-origin:left center;'>2025–05–23</div>
<div style='position:absolute;left:1001.00px;top:229.82px;font-size:12.5px;line-height:12.5px;font-weight:400;color:#22242f;white-space:nowrap;'>EUR</div>
<div style='position:absolute;right:533.80px;top:229.82px;font-size:12.5px;line-height:12.5px;font-weight:400;color:#22242f;white-space:nowrap;transform:scaleX(1.055);transform-origin:right center;'>100.00</div>
<div style='position:absolute;right:421.30px;top:229.82px;font-size:12.5px;line-height:12.5px;font-weight:400;color:#22242f;white-space:nowrap;transform:scaleX(1.055);transform-origin:right center;'>21.00</div>
<div style='position:absolute;right:309.00px;top:229.82px;font-size:12.5px;line-height:12.5px;font-weight:400;color:#22242f;white-space:nowrap;transform:scaleX(1.055);transform-origin:right center;'>121.00</div>
<div style="position:absolute;left:1473px;top:222.00px;width:107px;height:27px;background:#c4dcfc;border-radius:5px;"></div>
<div style='position:absolute;left:1487.00px;top:229.82px;font-size:12.5px;line-height:12.5px;font-weight:400;color:#1f4b8c;white-space:nowrap;'>Naujas</div>
<div style="position:absolute;left:302px;top:253px;width:1418px;height:35px;background:#fff;border-bottom:1px solid #e8e8ea"></div>
<div style="position:absolute;left:302px;top:253px;width:4px;height:34px;background:#c4dcfc"></div>
<div style="position:absolute;left:317px;top:264.20px;width:14px;height:14.7px;background:#fff;border:1.3px solid #d6d6d9;border-radius:3px;"></div>
<div style='position:absolute;left:370.80px;top:264.92px;font-size:12.5px;line-height:12.5px;font-weight:400;color:#11806a;white-space:nowrap;transform:scaleX(1.03);transform-origin:left center;text-decoration:underline;text-underline-offset:0.5px;'>AMJ0051</div>
<div style='position:absolute;left:506.00px;top:264.92px;font-size:12.5px;line-height:12.5px;font-weight:400;color:#22242f;white-space:nowrap;'>Sąskaita</div>
<div style='position:absolute;left:618.40px;top:264.92px;font-size:12.5px;line-height:12.5px;font-weight:400;color:#22242f;white-space:nowrap;'>UAB Paslaugos</div>
<div style='position:absolute;left:888.20px;top:264.92px;font-size:12.5px;line-height:12.5px;font-weight:400;color:#22242f;white-space:nowrap;transform:scaleX(1.05);transform-origin:left center;'>2025–05–01</div>
<div style='position:absolute;left:1001.00px;top:264.92px;font-size:12.5px;line-height:12.5px;font-weight:400;color:#22242f;white-space:nowrap;'>EUR</div>
<div style='position:absolute;right:533.80px;top:264.92px;font-size:12.5px;line-height:12.5px;font-weight:400;color:#22242f;white-space:nowrap;transform:scaleX(1.055);transform-origin:right center;'>500.00</div>
<div style='position:absolute;right:421.30px;top:264.92px;font-size:12.5px;line-height:12.5px;font-weight:400;color:#22242f;white-space:nowrap;transform:scaleX(1.055);transform-origin:right center;'>105.00</div>
<div style='position:absolute;right:309.00px;top:264.92px;font-size:12.5px;line-height:12.5px;font-weight:400;color:#22242f;white-space:nowrap;transform:scaleX(1.055);transform-origin:right center;'>605.00</div>
<div style="position:absolute;left:1473px;top:257.10px;width:107px;height:27px;background:#c4dcfc;border-radius:5px;"></div>
<div style='position:absolute;left:1487.00px;top:264.92px;font-size:12.5px;line-height:12.5px;font-weight:400;color:#1f4b8c;white-space:nowrap;'>Naujas</div>
<div style="position:absolute;left:302px;top:288px;width:1418px;height:35px;background:#fff;border-bottom:1px solid #e8e8ea"></div>
<div style="position:absolute;left:302px;top:288px;width:4px;height:34px;background:#c4dcfc"></div>
<div style="position:absolute;left:317px;top:299.30px;width:14px;height:14.7px;background:#fff;border:1.3px solid #d6d6d9;border-radius:3px;"></div>
<div style='position:absolute;left:370.80px;top:300.02px;font-size:12.5px;line-height:12.5px;font-weight:400;color:#11806a;white-space:nowrap;transform:scaleX(1.03);transform-origin:left center;text-decoration:underline;text-underline-offset:0.5px;'>AMJ0050</div>
<div style='position:absolute;left:506.00px;top:300.02px;font-size:12.5px;line-height:12.5px;font-weight:400;color:#22242f;white-space:nowrap;'>Sąskaita</div>
<div style='position:absolute;left:618.40px;top:300.02px;font-size:12.5px;line-height:12.5px;font-weight:400;color:#22242f;white-space:nowrap;'>UAB Paslaugos</div>
<div style='position:absolute;left:888.20px;top:300.02px;font-size:12.5px;line-height:12.5px;font-weight:400;color:#22242f;white-space:nowrap;transform:scaleX(1.05);transform-origin:left center;'>2025–04–01</div>
<div style='position:absolute;left:1001.00px;top:300.02px;font-size:12.5px;line-height:12.5px;font-weight:400;color:#22242f;white-space:nowrap;'>EUR</div>
<div style='position:absolute;right:533.80px;top:300.02px;font-size:12.5px;line-height:12.5px;font-weight:400;color:#22242f;white-space:nowrap;transform:scaleX(1.055);transform-origin:right center;'>500.00</div>
<div style='position:absolute;right:421.30px;top:300.02px;font-size:12.5px;line-height:12.5px;font-weight:400;color:#22242f;white-space:nowrap;transform:scaleX(1.055);transform-origin:right center;'>105.00</div>
<div style='position:absolute;right:309.00px;top:300.02px;font-size:12.5px;line-height:12.5px;font-weight:400;color:#22242f;white-space:nowrap;transform:scaleX(1.055);transform-origin:right center;'>605.00</div>
<div style="position:absolute;left:1473px;top:292.20px;width:107px;height:27px;background:#c4dcfc;border-radius:5px;"></div>
<div style='position:absolute;left:1487.00px;top:300.02px;font-size:12.5px;line-height:12.5px;font-weight:400;color:#1f4b8c;white-space:nowrap;'>Naujas</div>
<div style="position:absolute;left:302px;top:323px;width:1418px;height:35px;background:#eaf6f1;border-bottom:1px solid #e8e8ea"></div>
<div style="position:absolute;left:302px;top:323px;width:4px;height:34px;background:#cbe9cc"></div>
<div style="position:absolute;left:317px;top:334.40px;width:14px;height:14.7px;background:#10a96a;border-radius:3px;"></div>
<svg style="position:absolute;left:317px;top:334.40px" width="14" height="14.7" viewBox="0 0 14 14.7" fill="none" stroke="#fff" stroke-width="1.6" stroke-linecap="round" stroke-linejoin="round"><path d="M3.8 7.5l2.2 2.2l4.2 -4.2"/></svg>
<div style='position:absolute;left:370.80px;top:335.12px;font-size:12.5px;line-height:12.5px;font-weight:400;color:#11806a;white-space:nowrap;transform:scaleX(1.03);transform-origin:left center;text-decoration:underline;text-underline-offset:0.5px;'>AMJ0039</div>
<div style='position:absolute;left:506.00px;top:335.12px;font-size:12.5px;line-height:12.5px;font-weight:400;color:#22242f;white-space:nowrap;'>Sąskaita</div>
<div style='position:absolute;left:618.40px;top:335.12px;font-size:12.5px;line-height:12.5px;font-weight:400;color:#22242f;white-space:nowrap;'>UAB Paslaugos</div>
<div style='position:absolute;left:888.20px;top:335.12px;font-size:12.5px;line-height:12.5px;font-weight:400;color:#22242f;white-space:nowrap;transform:scaleX(1.05);transform-origin:left center;'>2025–03–01</div>
<div style='position:absolute;left:1001.00px;top:335.12px;font-size:12.5px;line-height:12.5px;font-weight:400;color:#22242f;white-space:nowrap;'>EUR</div>
<div style='position:absolute;right:533.80px;top:335.12px;font-size:12.5px;line-height:12.5px;font-weight:400;color:#22242f;white-space:nowrap;transform:scaleX(1.055);transform-origin:right center;'>500.00</div>
<div style='position:absolute;right:421.30px;top:335.12px;font-size:12.5px;line-height:12.5px;font-weight:400;color:#22242f;white-space:nowrap;transform:scaleX(1.055);transform-origin:right center;'>105.00</div>
<div style='position:absolute;right:309.00px;top:335.12px;font-size:12.5px;line-height:12.5px;font-weight:400;color:#22242f;white-space:nowrap;transform:scaleX(1.055);transform-origin:right center;'>605.00</div>
<div style="position:absolute;left:1473px;top:327.30px;width:107px;height:27px;background:#cbe9cc;border-radius:5px;"></div>
<div style='position:absolute;left:1487.00px;top:335.12px;font-size:12.5px;line-height:12.5px;font-weight:400;color:#198a6c;white-space:nowrap;'>Registruotas</div>
<div style="position:absolute;left:302px;top:358px;width:1418px;height:35px;background:#fff;border-bottom:1px solid #e8e8ea"></div>
<div style="position:absolute;left:302px;top:358px;width:4px;height:34px;background:#c4dcfc"></div>
<div style="position:absolute;left:317px;top:369.50px;width:14px;height:14.7px;background:#fff;border:1.3px solid #d6d6d9;border-radius:3px;"></div>
<div style='position:absolute;left:370.80px;top:370.22px;font-size:12.5px;line-height:12.5px;font-weight:400;color:#11806a;white-space:nowrap;transform:scaleX(1.03);transform-origin:left center;text-decoration:underline;text-underline-offset:0.5px;'>AMJ0038</div>
<div style='position:absolute;left:506.00px;top:370.22px;font-size:12.5px;line-height:12.5px;font-weight:400;color:#22242f;white-space:nowrap;'>Grąžinimas</div>
<div style='position:absolute;left:618.40px;top:370.22px;font-size:12.5px;line-height:12.5px;font-weight:400;color:#22242f;white-space:nowrap;'>UAB Žiema</div>
<div style='position:absolute;left:888.20px;top:370.22px;font-size:12.5px;line-height:12.5px;font-weight:400;color:#22242f;white-space:nowrap;transform:scaleX(1.05);transform-origin:left center;'>2025–05–19</div>
<div style='position:absolute;left:1001.00px;top:370.22px;font-size:12.5px;line-height:12.5px;font-weight:400;color:#22242f;white-space:nowrap;'>EUR</div>
<div style='position:absolute;right:533.80px;top:370.22px;font-size:12.5px;line-height:12.5px;font-weight:400;color:#22242f;white-space:nowrap;transform:scaleX(1.055);transform-origin:right center;'>80.00</div>
<div style='position:absolute;right:421.30px;top:370.22px;font-size:12.5px;line-height:12.5px;font-weight:400;color:#22242f;white-space:nowrap;transform:scaleX(1.055);transform-origin:right center;'>16.80</div>
<div style='position:absolute;right:309.00px;top:370.22px;font-size:12.5px;line-height:12.5px;font-weight:400;color:#22242f;white-space:nowrap;transform:scaleX(1.055);transform-origin:right center;'>96.80</div>
<div style="position:absolute;left:1473px;top:362.40px;width:107px;height:27px;background:#c4dcfc;border-radius:5px;"></div>
<div style='position:absolute;left:1487.00px;top:370.22px;font-size:12.5px;line-height:12.5px;font-weight:400;color:#1f4b8c;white-space:nowrap;'>Naujas</div>
<div style="position:absolute;left:302px;top:393px;width:1418px;height:35px;background:#fff;border-bottom:1px solid #e8e8ea"></div>
<div style="position:absolute;left:302px;top:393px;width:4px;height:34px;background:#f7df88"></div>
<div style="position:absolute;left:317px;top:405.40px;width:14px;height:14.7px;background:#fff;border:1.3px solid #d6d6d9;border-radius:3px;"></div>
<div style='position:absolute;left:370.80px;top:406.12px;font-size:12.5px;line-height:12.5px;font-weight:400;color:#11806a;white-space:nowrap;transform:scaleX(1.03);transform-origin:left center;text-decoration:underline;text-underline-offset:0.5px;'>AMJ0037</div>
<div style='position:absolute;left:506.00px;top:406.12px;font-size:12.5px;line-height:12.5px;font-weight:400;color:#22242f;white-space:nowrap;'>Grąžinimas</div>
<div style='position:absolute;left:618.40px;top:406.12px;font-size:12.5px;line-height:12.5px;font-weight:400;color:#22242f;white-space:nowrap;'>UAB Žiema</div>
<div style='position:absolute;left:888.20px;top:406.12px;font-size:12.5px;line-height:12.5px;font-weight:400;color:#22242f;white-space:nowrap;transform:scaleX(1.05);transform-origin:left center;'>2025–05–19</div>
<div style='position:absolute;left:1001.00px;top:406.12px;font-size:12.5px;line-height:12.5px;font-weight:400;color:#22242f;white-space:nowrap;'>EUR</div>
<div style='position:absolute;right:533.80px;top:406.12px;font-size:12.5px;line-height:12.5px;font-weight:400;color:#22242f;white-space:nowrap;transform:scaleX(1.055);transform-origin:right center;'>0.00</div>
<div style='position:absolute;right:421.30px;top:406.12px;font-size:12.5px;line-height:12.5px;font-weight:400;color:#22242f;white-space:nowrap;transform:scaleX(1.055);transform-origin:right center;'>0.00</div>
<div style='position:absolute;right:309.00px;top:406.12px;font-size:12.5px;line-height:12.5px;font-weight:400;color:#22242f;white-space:nowrap;transform:scaleX(1.055);transform-origin:right center;'>0.00</div>
<div style="position:absolute;left:1473px;top:398.30px;width:107px;height:27px;background:#f7df88;border-radius:5px;"></div>
<div style='position:absolute;left:1487.00px;top:406.12px;font-size:12.5px;line-height:12.5px;font-weight:400;color:#6b5312;white-space:nowrap;'>Koreguotas</div>
<div style="position:absolute;left:302px;top:428px;width:1418px;height:35px;background:#eaf6f1;border-bottom:1px solid #e8e8ea"></div>
<div style="position:absolute;left:302px;top:428px;width:4px;height:34px;background:#cbe9cc"></div>
<div style="position:absolute;left:317px;top:440.50px;width:14px;height:14.7px;background:#10a96a;border-radius:3px;"></div>
<svg style="position:absolute;left:317px;top:440.50px" width="14" height="14.7" viewBox="0 0 14 14.7" fill="none" stroke="#fff" stroke-width="1.6" stroke-linecap="round" stroke-linejoin="round"><path d="M3.8 7.5l2.2 2.2l4.2 -4.2"/></svg>
<div style='position:absolute;left:370.80px;top:441.22px;font-size:12.5px;line-height:12.5px;font-weight:400;color:#11806a;white-space:nowrap;transform:scaleX(1.03);transform-origin:left center;text-decoration:underline;text-underline-offset:0.5px;'>AMJ0036</div>
<div style='position:absolute;left:506.00px;top:441.22px;font-size:12.5px;line-height:12.5px;font-weight:400;color:#22242f;white-space:nowrap;'>Sąskaita</div>
<div style='position:absolute;left:618.40px;top:441.22px;font-size:12.5px;line-height:12.5px;font-weight:400;color:#22242f;white-space:nowrap;'>UAB Žiema</div>
<div style='position:absolute;left:888.20px;top:441.22px;font-size:12.5px;line-height:12.5px;font-weight:400;color:#22242f;white-space:nowrap;transform:scaleX(1.05);transform-origin:left center;'>2025–05–16</div>
<div style='position:absolute;left:1001.00px;top:441.22px;font-size:12.5px;line-height:12.5px;font-weight:400;color:#22242f;white-space:nowrap;'>EUR</div>
<div style='position:absolute;right:533.80px;top:441.22px;font-size:12.5px;line-height:12.5px;font-weight:400;color:#22242f;white-space:nowrap;transform:scaleX(1.055);transform-origin:right center;'>120.00</div>
<div style='position:absolute;right:421.30px;top:441.22px;font-size:12.5px;line-height:12.5px;font-weight:400;color:#22242f;white-space:nowrap;transform:scaleX(1.055);transform-origin:right center;'>25.20</div>
<div style='position:absolute;right:309.00px;top:441.22px;font-size:12.5px;line-height:12.5px;font-weight:400;color:#22242f;white-space:nowrap;transform:scaleX(1.055);transform-origin:right center;'>145.20</div>
<div style="position:absolute;left:1473px;top:433.40px;width:107px;height:27px;background:#cbe9cc;border-radius:5px;"></div>
<div style='position:absolute;left:1487.00px;top:441.22px;font-size:12.5px;line-height:12.5px;font-weight:400;color:#198a6c;white-space:nowrap;'>Registruotas</div>
<div style="position:absolute;left:302px;top:463px;width:1418px;height:36px;background:#fff;border-bottom:1px solid #e8e8ea"></div>
<div style="position:absolute;left:302px;top:463px;width:4px;height:35px;background:#f7df88"></div>
<div style="position:absolute;left:317px;top:474.80px;width:14px;height:14.7px;background:#fff;border:1.3px solid #d6d6d9;border-radius:3px;"></div>
<div style='position:absolute;left:370.80px;top:475.52px;font-size:12.5px;line-height:12.5px;font-weight:400;color:#11806a;white-space:nowrap;transform:scaleX(1.03);transform-origin:left center;text-decoration:underline;text-underline-offset:0.5px;'>AMJ0035</div>
<div style='position:absolute;left:506.00px;top:475.52px;font-size:12.5px;line-height:12.5px;font-weight:400;color:#22242f;white-space:nowrap;'>Sąskaita</div>
<div style='position:absolute;left:618.40px;top:475.52px;font-size:12.5px;line-height:12.5px;font-weight:400;color:#22242f;white-space:nowrap;'>UAB Žiema</div>
<div style='position:absolute;left:888.20px;top:475.52px;font-size:12.5px;line-height:12.5px;font-weight:400;color:#22242f;white-space:nowrap;transform:scaleX(1.05);transform-origin:left center;'>2025–05–19</div>
<div style='position:absolute;left:1001.00px;top:475.52px;font-size:12.5px;line-height:12.5px;font-weight:400;color:#22242f;white-space:nowrap;'>EUR</div>
<div style='position:absolute;right:533.80px;top:475.52px;font-size:12.5px;line-height:12.5px;font-weight:400;color:#22242f;white-space:nowrap;transform:scaleX(1.055);transform-origin:right center;'>40.00</div>
<div style='position:absolute;right:421.30px;top:475.52px;font-size:12.5px;line-height:12.5px;font-weight:400;color:#22242f;white-space:nowrap;transform:scaleX(1.055);transform-origin:right center;'>8.40</div>
<div style='position:absolute;right:309.00px;top:475.52px;font-size:12.5px;line-height:12.5px;font-weight:400;color:#22242f;white-space:nowrap;transform:scaleX(1.055);transform-origin:right center;'>48.40</div>
<div style="position:absolute;left:1473px;top:467.70px;width:107px;height:27px;background:#f7df88;border-radius:5px;"></div>
<div style='position:absolute;left:1487.00px;top:475.52px;font-size:12.5px;line-height:12.5px;font-weight:400;color:#6b5312;white-space:nowrap;'>Koreguotas</div>
<div style="position:absolute;left:302px;top:499px;width:1418px;height:35px;background:#fff;border-bottom:1px solid #e8e8ea"></div>
<div style="position:absolute;left:302px;top:499px;width:4px;height:34px;background:#cbe9cc"></div>
<div style="position:absolute;left:317px;top:509.90px;width:14px;height:14.7px;background:#fff;border:1.3px solid #d6d6d9;border-radius:3px;"></div>
<div style='position:absolute;left:370.80px;top:510.62px;font-size:12.5px;line-height:12.5px;font-weight:400;color:#11806a;white-space:nowrap;transform:scaleX(1.088);transform-origin:left center;text-decoration:underline;text-underline-offset:0.5px;'>MOK000000006</div>
<div style='position:absolute;left:506.00px;top:510.62px;font-size:12.5px;line-height:12.5px;font-weight:400;color:#22242f;white-space:nowrap;'>Sąskaita</div>
<div style='position:absolute;left:618.40px;top:510.62px;font-size:12.5px;line-height:12.5px;font-weight:400;color:#22242f;white-space:nowrap;'>UAB "Paveikslai"</div>
<div style='position:absolute;left:888.20px;top:510.62px;font-size:12.5px;line-height:12.5px;font-weight:400;color:#22242f;white-space:nowrap;transform:scaleX(1.05);transform-origin:left center;'>2023–09–06</div>
<div style='position:absolute;left:1001.00px;top:510.62px;font-size:12.5px;line-height:12.5px;font-weight:400;color:#22242f;white-space:nowrap;'>EUR</div>
<div style='position:absolute;right:533.80px;top:510.62px;font-size:12.5px;line-height:12.5px;font-weight:400;color:#22242f;white-space:nowrap;transform:scaleX(1.055);transform-origin:right center;'>275.00</div>
<div style='position:absolute;right:421.30px;top:510.62px;font-size:12.5px;line-height:12.5px;font-weight:400;color:#22242f;white-space:nowrap;transform:scaleX(1.055);transform-origin:right center;'>57.76</div>
<div style='position:absolute;right:309.00px;top:510.62px;font-size:12.5px;line-height:12.5px;font-weight:400;color:#22242f;white-space:nowrap;transform:scaleX(1.055);transform-origin:right center;'>332.76</div>
<div style="position:absolute;left:1473px;top:502.80px;width:107px;height:27px;background:#cbe9cc;border-radius:5px;"></div>
<div style='position:absolute;left:1487.00px;top:510.62px;font-size:12.5px;line-height:12.5px;font-weight:400;color:#198a6c;white-space:nowrap;'>Registruotas</div>
<div style="position:absolute;left:302px;top:534px;width:1418px;height:35px;background:#fff;border-bottom:1px solid #e8e8ea"></div>
<div style="position:absolute;left:302px;top:534px;width:4px;height:34px;background:#cbe9cc"></div>
<div style="position:absolute;left:317px;top:545.00px;width:14px;height:14.7px;background:#fff;border:1.3px solid #d6d6d9;border-radius:3px;"></div>
<div style='position:absolute;left:370.80px;top:545.72px;font-size:12.5px;line-height:12.5px;font-weight:400;color:#11806a;white-space:nowrap;transform:scaleX(1.03);transform-origin:left center;text-decoration:underline;text-underline-offset:0.5px;'>AMJ0033</div>
<div style='position:absolute;left:506.00px;top:545.72px;font-size:12.5px;line-height:12.5px;font-weight:400;color:#22242f;white-space:nowrap;'>Sąskaita</div>
<div style='position:absolute;left:618.40px;top:545.72px;font-size:12.5px;line-height:12.5px;font-weight:400;color:#22242f;white-space:nowrap;'>UAB "Stogas"</div>
<div style='position:absolute;left:888.20px;top:545.72px;font-size:12.5px;line-height:12.5px;font-weight:400;color:#22242f;white-space:nowrap;transform:scaleX(1.05);transform-origin:left center;'>2025–05–12</div>
<div style='position:absolute;left:1001.00px;top:545.72px;font-size:12.5px;line-height:12.5px;font-weight:400;color:#22242f;white-space:nowrap;'>EUR</div>
<div style='position:absolute;right:533.80px;top:545.72px;font-size:12.5px;line-height:12.5px;font-weight:400;color:#22242f;white-space:nowrap;transform:scaleX(1.055);transform-origin:right center;'>4 500.00</div>
<div style='position:absolute;right:421.30px;top:545.72px;font-size:12.5px;line-height:12.5px;font-weight:400;color:#22242f;white-space:nowrap;transform:scaleX(1.055);transform-origin:right center;'>945.00</div>
<div style='position:absolute;right:309.00px;top:545.72px;font-size:12.5px;line-height:12.5px;font-weight:400;color:#22242f;white-space:nowrap;transform:scaleX(1.055);transform-origin:right center;'>5 445.00</div>
<div style="position:absolute;left:1473px;top:537.90px;width:107px;height:27px;background:#cbe9cc;border-radius:5px;"></div>
<div style='position:absolute;left:1487.00px;top:545.72px;font-size:12.5px;line-height:12.5px;font-weight:400;color:#198a6c;white-space:nowrap;'>Registruotas</div>
<div style="position:absolute;left:302px;top:569px;width:1418px;height:35px;background:#fff;border-bottom:1px solid #e8e8ea"></div>
<div style="position:absolute;left:302px;top:569px;width:4px;height:34px;background:#cbe9cc"></div>
<div style="position:absolute;left:317px;top:580.10px;width:14px;height:14.7px;background:#fff;border:1.3px solid #d6d6d9;border-radius:3px;"></div>
<div style='position:absolute;left:370.80px;top:580.82px;font-size:12.5px;line-height:12.5px;font-weight:400;color:#11806a;white-space:nowrap;transform:scaleX(1.03);transform-origin:left center;text-decoration:underline;text-underline-offset:0.5px;'>AMJ0032</div>
<div style='position:absolute;left:506.00px;top:580.82px;font-size:12.5px;line-height:12.5px;font-weight:400;color:#22242f;white-space:nowrap;'>Sąskaita</div>
<div style='position:absolute;left:618.40px;top:580.82px;font-size:12.5px;line-height:12.5px;font-weight:400;color:#22242f;white-space:nowrap;'>UAB "Stogas"</div>
<div style='position:absolute;left:888.20px;top:580.82px;font-size:12.5px;line-height:12.5px;font-weight:400;color:#22242f;white-space:nowrap;transform:scaleX(1.05);transform-origin:left center;'>2025–05–05</div>
<div style='position:absolute;left:1001.00px;top:580.82px;font-size:12.5px;line-height:12.5px;font-weight:400;color:#22242f;white-space:nowrap;'>EUR</div>
<div style='position:absolute;right:533.80px;top:580.82px;font-size:12.5px;line-height:12.5px;font-weight:400;color:#22242f;white-space:nowrap;transform:scaleX(1.055);transform-origin:right center;'>6 000.00</div>
<div style='position:absolute;right:421.30px;top:580.82px;font-size:12.5px;line-height:12.5px;font-weight:400;color:#22242f;white-space:nowrap;transform:scaleX(1.055);transform-origin:right center;'>1 260.00</div>
<div style='position:absolute;right:309.00px;top:580.82px;font-size:12.5px;line-height:12.5px;font-weight:400;color:#22242f;white-space:nowrap;transform:scaleX(1.055);transform-origin:right center;'>7 260.00</div>
<div style="position:absolute;left:1473px;top:573.00px;width:107px;height:27px;background:#cbe9cc;border-radius:5px;"></div>
<div style='position:absolute;left:1487.00px;top:580.82px;font-size:12.5px;line-height:12.5px;font-weight:400;color:#198a6c;white-space:nowrap;'>Registruotas</div>
<div style="position:absolute;left:302px;top:604px;width:1418px;height:35px;background:#fff;border-bottom:1px solid #e8e8ea"></div>
<div style="position:absolute;left:302px;top:604px;width:4px;height:34px;background:#cbe9cc"></div>
<div style="position:absolute;left:317px;top:615.20px;width:14px;height:14.7px;background:#fff;border:1.3px solid #d6d6d9;border-radius:3px;"></div>
<div style='position:absolute;left:370.80px;top:615.92px;font-size:12.5px;line-height:12.5px;font-weight:400;color:#11806a;white-space:nowrap;transform:scaleX(1.03);transform-origin:left center;text-decoration:underline;text-underline-offset:0.5px;'>AMJ0031</div>
<div style='position:absolute;left:506.00px;top:615.92px;font-size:12.5px;line-height:12.5px;font-weight:400;color:#22242f;white-space:nowrap;'>Sąskaita</div>
<div style='position:absolute;left:618.40px;top:615.92px;font-size:12.5px;line-height:12.5px;font-weight:400;color:#22242f;white-space:nowrap;'>UAB "Stogas"</div>
<div style='position:absolute;left:888.20px;top:615.92px;font-size:12.5px;line-height:12.5px;font-weight:400;color:#22242f;white-space:nowrap;transform:scaleX(1.05);transform-origin:left center;'>2025–05–05</div>
<div style='position:absolute;left:1001.00px;top:615.92px;font-size:12.5px;line-height:12.5px;font-weight:400;color:#22242f;white-space:nowrap;'>EUR</div>
<div style='position:absolute;right:533.80px;top:615.92px;font-size:12.5px;line-height:12.5px;font-weight:400;color:#22242f;white-space:nowrap;transform:scaleX(1.055);transform-origin:right center;'>6 000.00</div>
<div style='position:absolute;right:421.30px;top:615.92px;font-size:12.5px;line-height:12.5px;font-weight:400;color:#22242f;white-space:nowrap;transform:scaleX(1.055);transform-origin:right center;'>1 260.00</div>
<div style='position:absolute;right:309.00px;top:615.92px;font-size:12.5px;line-height:12.5px;font-weight:400;color:#22242f;white-space:nowrap;transform:scaleX(1.055);transform-origin:right center;'>7 260.00</div>
<div style="position:absolute;left:1473px;top:608.10px;width:107px;height:27px;background:#cbe9cc;border-radius:5px;"></div>
<div style='position:absolute;left:1487.00px;top:615.92px;font-size:12.5px;line-height:12.5px;font-weight:400;color:#198a6c;white-space:nowrap;'>Registruotas</div>
<div style="position:absolute;left:487px;top:186px;width:1px;height:421px;background:#e6e6e8"></div>
<div style="position:absolute;left:599px;top:186px;width:1px;height:421px;background:#e6e6e8"></div>
<div style="position:absolute;left:869px;top:186px;width:1px;height:421px;background:#e6e6e8"></div>
<div style="position:absolute;left:982px;top:186px;width:1px;height:421px;background:#e6e6e8"></div>
<div style="position:absolute;left:1117px;top:186px;width:1px;height:421px;background:#e6e6e8"></div>
<div style="position:absolute;left:1229px;top:186px;width:1px;height:421px;background:#e6e6e8"></div>
<div style="position:absolute;left:1342px;top:186px;width:1px;height:421px;background:#e6e6e8"></div>
<div style="position:absolute;left:1454px;top:186px;width:1px;height:421px;background:#e6e6e8"></div>
<div style="position:absolute;left:1589px;top:186px;width:1px;height:421px;background:#e6e6e8"></div>
<div style="position:absolute;left:1720px;top:218px;width:16px;height:389px;background:#fafafa;border-left:1px solid #ececee;"></div>
<svg style="position:absolute;left:1723px;top:226px" width="11" height="8" viewBox="0 0 11 8"><path d="M0.6 7l4.9 -5l4.9 5z" fill="#858585"/></svg>
<div style="position:absolute;left:1724px;top:241px;width:9px;height:348px;background:#8b8b8b;border-radius:5px;"></div>
<div style="position:absolute;left:557px;top:183.8px;width:229.5px;height:124.4px;background:#fff;border:1px solid #e4e4e6;border-radius:7px;box-shadow:0 5px 16px rgba(0,0,0,0.12);"></div>
<div style='position:absolute;left:569.20px;top:196.00px;font-size:8.5px;line-height:8.5px;font-weight:400;color:#6b7990;white-space:nowrap;letter-spacing:1.12px;-webkit-text-stroke:0.4px #6b7990;'>EL. LAIŠKŲ ŠABLONAI</div>
<div style="position:absolute;left:560.3px;top:208.2px;width:220.6px;height:32.4px;background:#dfeeea;border:3px solid #f97a38;border-radius:3px;"></div>
<svg class="i" style="position:absolute;left:569.70px;top:217.30px;overflow:visible;" width="12.90" height="12.80"><g transform="translate(-0.359 -0.343) scale(0.9590 0.9431)" fill="none" stroke="#2d303b" stroke-width="1.2" stroke-linecap="round" stroke-linejoin="round"><path d="M7.2 7l6 -6"/><path d="M13.2 1l-3.6 12a0.35 0.35 0 0 1 -0.6 0l-2 -6l-5.6 -2.4a0.35 0.35 0 0 1 0 -0.6z"/></g></svg>
<div style='position:absolute;left:590.60px;top:217.52px;font-size:12.5px;line-height:12.5px;font-weight:400;color:#30333e;white-space:nowrap;'>SS001 - Siųsti el.paštu</div>
<svg class="i" style="position:absolute;left:569.70px;top:249.60px;overflow:visible;" width="12.90" height="12.80"><g transform="translate(-0.359 -0.343) scale(0.9590 0.9431)" fill="none" stroke="#2d303b" stroke-width="1.2" stroke-linecap="round" stroke-linejoin="round"><path d="M7.2 7l6 -6"/><path d="M13.2 1l-3.6 12a0.35 0.35 0 0 1 -0.6 0l-2 -6l-5.6 -2.4a0.35 0.35 0 0 1 0 -0.6z"/></g></svg>
<div style='position:absolute;left:590.60px;top:249.82px;font-size:12.5px;line-height:12.5px;font-weight:400;color:#30333e;white-space:nowrap;'>DEM0001 - Siųsti el.paštu</div>
<svg class="i" style="position:absolute;left:569.70px;top:282.30px;overflow:visible;" width="12.90" height="12.80"><g transform="translate(-0.359 -0.343) scale(0.9590 0.9431)" fill="none" stroke="#2d303b" stroke-width="1.2" stroke-linecap="round" stroke-linejoin="round"><path d="M7.2 7l6 -6"/><path d="M13.2 1l-3.6 12a0.35 0.35 0 0 1 -0.6 0l-2 -6l-5.6 -2.4a0.35 0.35 0 0 1 0 -0.6z"/></g></svg>
<div style='position:absolute;left:590.60px;top:282.52px;font-size:12.5px;line-height:12.5px;font-weight:400;color:#30333e;white-space:nowrap;'>DEM0067 - Siųsti el.paštu</div>
<svg style="position:absolute;left:0;top:0" width="1754" height="607" viewBox="0 0 1754 607"><line x1="790.5" y1="189.5" x2="784" y2="198.5" stroke="#f97a38" stroke-width="2.7" stroke-linecap="round"/><path d="M776.7 207.2L781.1 195.3L787.8 200.4Z" fill="#f97a38" stroke="#f97a38" stroke-width="0.6" stroke-linejoin="round"/></svg>
</body></html>
